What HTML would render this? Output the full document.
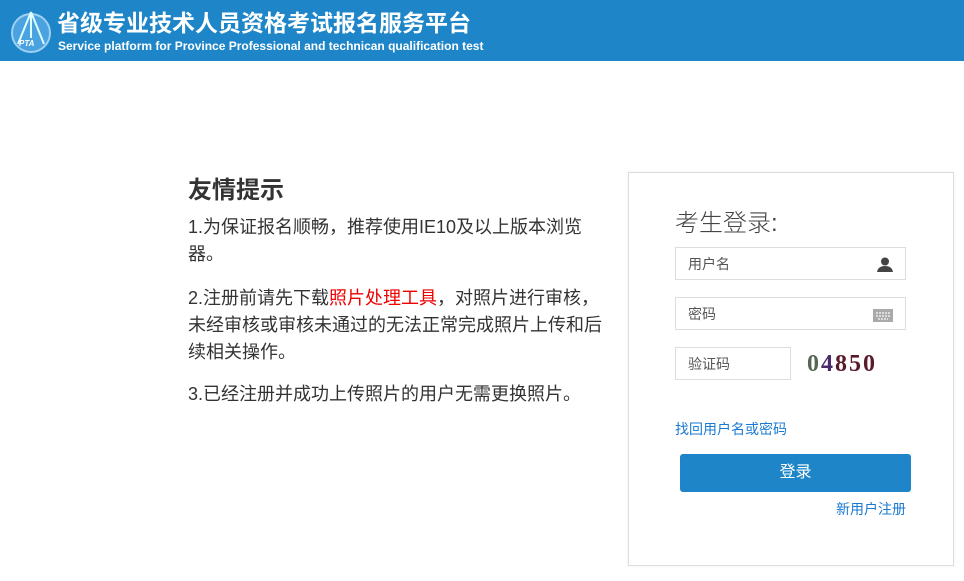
<!DOCTYPE html>
<html><head><meta charset="utf-8"><style>
body{margin:0;width:964px;height:581px;background:#fff;font-family:"Liberation Sans","Noto Sans CJK SC",sans-serif;position:relative;overflow:hidden}
.hd{position:absolute;left:0;top:0;width:964px;height:61px;background:#1e86c8}
.t1{position:absolute;left:57px;top:4px;color:#fff;font-size:23px;font-weight:bold}
.t2{position:absolute;left:58px;top:39px;color:#fff;font-size:12px;font-weight:bold}
.a{position:absolute}
.tip{left:188px;top:170px;font-size:24px;font-weight:bold;color:#333}
.p{left:188px;width:418px;font-size:18px;color:#333;line-height:27px}
.box{left:628px;top:172px;width:324px;height:392px;border:1px solid #ddd;box-shadow:0 0 3px #eee}
.in{position:absolute;border:1px solid #ddd;height:33px;font-size:14px;color:#555;line-height:33px;padding-left:12px;box-sizing:border-box}
</style></head><body>
<div class="hd">
<svg class="a" style="left:8px;top:8px" width="46" height="46" viewBox="0 0 46 46"><circle cx="23" cy="25" r="19" fill="#4aa3e0" stroke="#9ed0f2" stroke-width="2"/><path d="M23 4 L10 36 M23 4 L36 36 M23 4 L23 30" stroke="#dff" stroke-width="2" fill="none"/><text x="11" y="38" font-size="8" fill="#fff" font-weight="bold" font-style="italic">PTA</text></svg>
<div class="t1">省级专业技术人员资格考试报名服务平台</div>
<div class="t2">Service platform for Province Professional and technican qualification test</div>
</div>
<div class="a tip">友情提示</div>
<div class="a p" style="top:214px">1.为保证报名顺畅，推荐使用IE10及以上版本浏览器。</div>
<div class="a p" style="top:285px">2.注册前请先下载<span style="color:#e00">照片处理工具</span>，对照片进行审核，未经审核或审核未通过的无法正常完成照片上传和后续相关操作。</div>
<div class="a p" style="top:381px">3.已经注册并成功上传照片的用户无需更换照片。</div>
<div class="a box">
<div class="a" style="left:46px;top:30px;font-size:24px;color:#444;font-weight:300">考生登录:</div>
<div class="in" style="left:46px;top:74px;width:231px">用户名<svg style="position:absolute;right:12px;top:9px" width="16" height="15"><circle cx="8" cy="4.5" r="4" fill="#444"/><path d="M0 15 Q1 9 8 9 Q15 9 16 15Z" fill="#444"/></svg></div>
<div class="in" style="left:46px;top:124px;width:231px">密码<svg style="position:absolute;right:12px;top:9px" width="20" height="15"><rect x="0" y="2" width="20" height="13" fill="#aaa"/><path d="M3 6h14M3 9h14M5 12h10" stroke="#eee" stroke-width="1.5" stroke-dasharray="2 1"/></svg></div>
<div class="in" style="left:46px;top:174px;width:116px">验证码</div>
<div class="a" style="left:178px;top:175px;width:98px;height:33px;font-family:'Liberation Serif',serif;font-size:24px;font-weight:bold;letter-spacing:2px;color:#5a1a2a;line-height:33px"><span style="color:#556655">0</span><span style="color:#4a2a6a">4</span>850</div>
<div class="a" style="left:46px;top:246px;font-size:14px;color:#1a7ad0">找回用户名或密码</div>
<div class="a" style="left:51px;top:281px;width:231px;height:38px;background:#1e86c8;border-radius:3px;color:#fff;font-size:16px;text-align:center;line-height:38px">登录</div>
<div class="a" style="left:207px;top:326px;font-size:14px;color:#1a7ad0">新用户注册</div>
</div>
</body></html>
